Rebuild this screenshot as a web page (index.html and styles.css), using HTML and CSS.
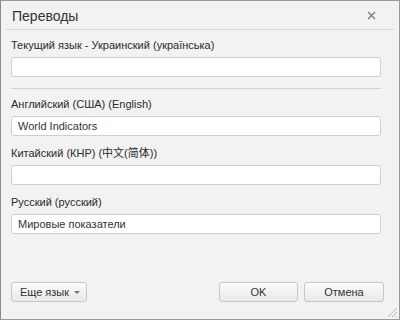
FILE: index.html
```html
<!DOCTYPE html>
<html lang="ru">
<head>
    <meta charset="UTF-8">
    <title>Переводы</title>
    <link rel="stylesheet" href="styles.css">
</head>
<body>

    <div class="dialog">
        <!-- Header -->
        <div class="dialog-header">
            <span class="dialog-title">Переводы</span>
            <span class="dialog-close">
                <svg width="9" height="9" viewBox="0 0 9 9"><path d="M1 1L8 8M8 1L1 8" stroke="#777" stroke-width="1.2"/></svg>
            </span>
        </div>

        <div class="dialog-body">
            <div class="field">
                <label>Текущий язык - Украинский (українська)</label>
                <input type="text" value="">
            </div>

            <div class="divider"></div>

            <div class="field">
                <label>Английский (США) (English)</label>
                <input type="text" value="World Indicators">
            </div>
            <div class="field">
                <label>Китайский (КНР) (中文(简体))</label>
                <input type="text" value="">
            </div>
            <div class="field">
                <label>Русский (русский)</label>
                <input type="text" value="Мировые показатели">
            </div>
        </div>

        <!-- Footer -->
        <div class="dialog-footer">
            <button class="btn btn-lang">Еще язык <span class="caret"></span></button>
            <div class="footer-right">
                <button class="btn btn-ok">OK</button>
                <button class="btn btn-cancel">Отмена</button>
            </div>
        </div>

        <svg class="grip" width="11" height="11" viewBox="0 0 11 11">
            <path d="M10 1L1 10M10 5L5 10M10 9L9 10" stroke="#b5b5b5" stroke-width="1"/>
        </svg>
    </div>

</body>
</html>
```

FILE: styles.css
```css
* {
    margin: 0;
    padding: 0;
    box-sizing: border-box;
}

body {
    font-family: "Liberation Sans", Arial, "Noto Sans CJK SC", sans-serif;
    background-color: #ffffff;
    color: #333333;
}

.dialog {
    position: relative;
    width: 400px;
    height: 320px;
    background-color: #f2f2f2;
    border: 1px solid #9a9a9a;
    border-left-color: #8a8a8a;
    display: flex;
    flex-direction: column;
}

/* Header */
.dialog-header {
    height: 29px;
    margin: 0 5px;
    padding: 0 6px;
    border-bottom: 1px solid #d6d6d6;
    display: flex;
    justify-content: space-between;
    align-items: center;
    flex-shrink: 0;
}

.dialog-title {
    font-size: 14px;
    color: #333;
    padding-top: 1px;
}

.dialog-close {
    display: flex;
    margin-right: 12px;
    margin-top: 1px;
}

/* Body */
.dialog-body {
    padding: 9px 18px 0 10px;
}

.field {
    margin-bottom: 11px;
}

.field label {
    display: block;
    font-size: 11px;
    line-height: 13px;
    margin-bottom: 5px;
    color: #2b2b2b;
}

.field input {
    display: block;
    width: 100%;
    height: 20px;
    border: 1px solid #cfcfcf;
    border-radius: 3px;
    background-color: #fff;
    padding: 0 6px;
    font-family: inherit;
    font-size: 11px;
    color: #333;
    outline: none;
}

.divider {
    height: 1px;
    background-color: #d3d3d3;
    margin: 2px 0 9px;
}

/* Footer */
.dialog-footer {
    margin-top: auto;
    padding: 0 15px 17px 10px;
    display: flex;
    justify-content: space-between;
}

.footer-right {
    display: flex;
    gap: 6px;
}

.btn {
    height: 20px;
    border: 1px solid #c8c8c8;
    border-radius: 3px;
    background: linear-gradient(#fbfbfb, #e9e9e9);
    font-family: inherit;
    font-size: 11px;
    color: #333;
    cursor: pointer;
}

.btn-lang {
    width: 76px;
    display: flex;
    align-items: center;
    justify-content: center;
    gap: 5px;
    padding-left: 2px;
}

.caret {
    width: 0;
    height: 0;
    border-left: 3px solid transparent;
    border-right: 3px solid transparent;
    border-top: 3px solid #777;
}

.btn-ok {
    width: 79px;
}

.btn-cancel {
    width: 80px;
}

.grip {
    position: absolute;
    right: 1px;
    bottom: 1px;
}
```
